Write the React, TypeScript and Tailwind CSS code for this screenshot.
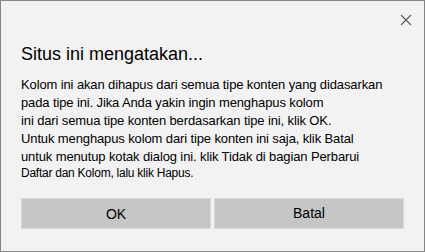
export default function App() {
  const lines = [
    "Kolom ini akan dihapus dari semua tipe konten yang didasarkan",
    "pada tipe ini. Jika Anda yakin ingin menghapus kolom",
    "ini dari semua tipe konten berdasarkan tipe ini, klik OK.",
    "Untuk menghapus kolom dari tipe konten ini saja, klik Batal",
    "untuk menutup kotak dialog ini. klik Tidak di bagian Perbarui",
  ];

  return (
    <div
      className="relative w-[425px] h-[252px] border border-[#858585] bg-[#f2f2f2] text-black"
      style={{ fontFamily: '"Liberation Sans", Arial, sans-serif' }}
    >
      {/* Close */}
      <button className="absolute right-[12px] top-[13px] w-[12px] h-[12px] flex items-center justify-center">
        <svg width="12" height="12" viewBox="0 0 12 12">
          <path d="M1 1 L11 11 M11 1 L1 11" stroke="#5a5a5a" strokeWidth="1.1" fill="none" />
        </svg>
      </button>

      <div className="flex flex-col px-[20px] pt-[41px]">
        <h1 className="text-[18px] leading-[24px] font-normal">Situs ini mengatakan...</h1>

        <div className="mt-[10px] text-[13px] leading-[18px] tracking-[-0.12px]">
          {lines.map((l) => (
            <div key={l} className="whitespace-nowrap">
              {l}
            </div>
          ))}
          <div className="whitespace-nowrap text-[12px] leading-[14px] tracking-[-0.25px]">
            Daftar dan Kolom, lalu klik Hapus.
          </div>
        </div>

        <div className="mt-[18px] grid grid-cols-2 gap-[3px]">
          <button className="h-[31px] bg-[#c6c6c6] border border-[#d9d9d9] text-[14px] pt-[2px]">OK</button>
          <button className="h-[31px] bg-[#c6c6c6] border border-[#d9d9d9] text-[14px]">Batal</button>
        </div>
      </div>
    </div>
  );
}
